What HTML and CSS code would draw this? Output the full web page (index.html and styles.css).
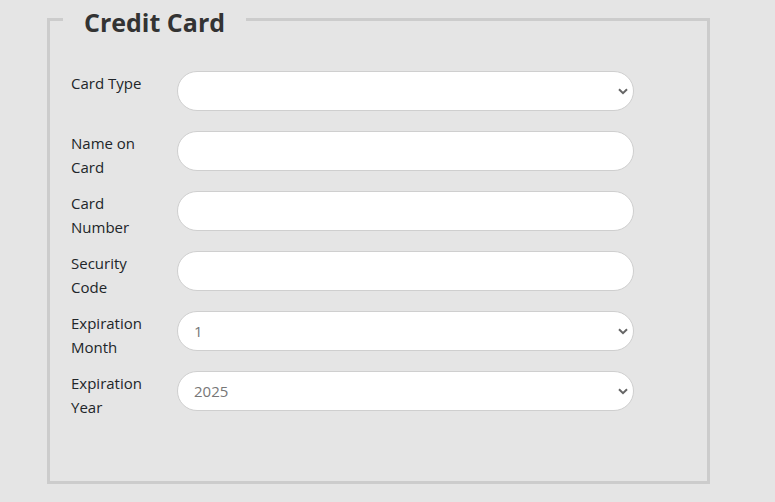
FILE: index.html
```html
<!DOCTYPE html>
<html lang="en">
<head>
<meta charset="utf-8">
<title>Credit Card</title>
<link rel="stylesheet" href="styles.css">
</head>
<body>
<main class="page">
  <fieldset class="card-fieldset">
    <legend class="card-legend">Credit Card</legend>
    <div class="form-row">
      <label class="form-label" for="ctype">Card Type</label>
      <select id="ctype" class="form-control form-select"><option></option></select>
    </div>
    <div class="form-row">
      <label class="form-label" for="cname">Name on Card</label>
      <input id="cname" class="form-control" type="text">
    </div>
    <div class="form-row">
      <label class="form-label" for="cnum">Card Number</label>
      <input id="cnum" class="form-control" type="text">
    </div>
    <div class="form-row">
      <label class="form-label" for="ccode">Security Code</label>
      <input id="ccode" class="form-control" type="text">
    </div>
    <div class="form-row">
      <label class="form-label" for="cmonth">Expiration Month</label>
      <select id="cmonth" class="form-control form-select"><option>1</option></select>
    </div>
    <div class="form-row">
      <label class="form-label" for="cyear">Expiration Year</label>
      <select id="cyear" class="form-control form-select"><option>2025</option></select>
    </div>
  </fieldset>
</main>
</body>
</html>
```

FILE: styles.css
```css
html, body {
  margin: 0;
  padding: 0;
  background: #e5e5e5;
  font-family: "Open Sans", "Noto Sans", sans-serif;
  color: #212529;
}

.page {
  padding: 0 0 0 47px;
}

.card-fieldset {
  box-sizing: border-box;
  width: 663px;
  height: 484px;
  margin: 0;
  padding: 32px 21px 0 21px;
  border: 3px solid #cccccc;
}

.card-legend {
  margin-left: -8px;
  padding: 6px 21px 0 21px;
  font-size: 25px;
  font-weight: 700;
  line-height: 33px;
  color: #333333;
}

.form-row {
  display: flex;
  align-items: flex-start;
  height: 60px;
}

.form-label {
  width: 106px;
  flex: none;
  font-size: 15px;
  line-height: 24px;
  padding-right: 20px;
  box-sizing: border-box;
}

.form-control {
  box-sizing: border-box;
  width: 457px;
  height: 40px;
  border: 1px solid #cfcfcf;
  border-radius: 20px;
  background: #ffffff;
  padding: 0 16px;
  font-family: inherit;
  font-size: 15px;
  color: #777777;
  outline: none;
}

.form-select {
  appearance: none;
  -webkit-appearance: none;
  background-image: url("data:image/svg+xml,%3Csvg xmlns='http://www.w3.org/2000/svg' width='10' height='7' viewBox='0 0 10 7'%3E%3Cpath d='M1 1.2l4 4 4-4' fill='none' stroke='%23666' stroke-width='2'/%3E%3C/svg%3E");
  background-repeat: no-repeat;
  background-position: right 5px center;
  background-size: 10px 7px;
}
```
